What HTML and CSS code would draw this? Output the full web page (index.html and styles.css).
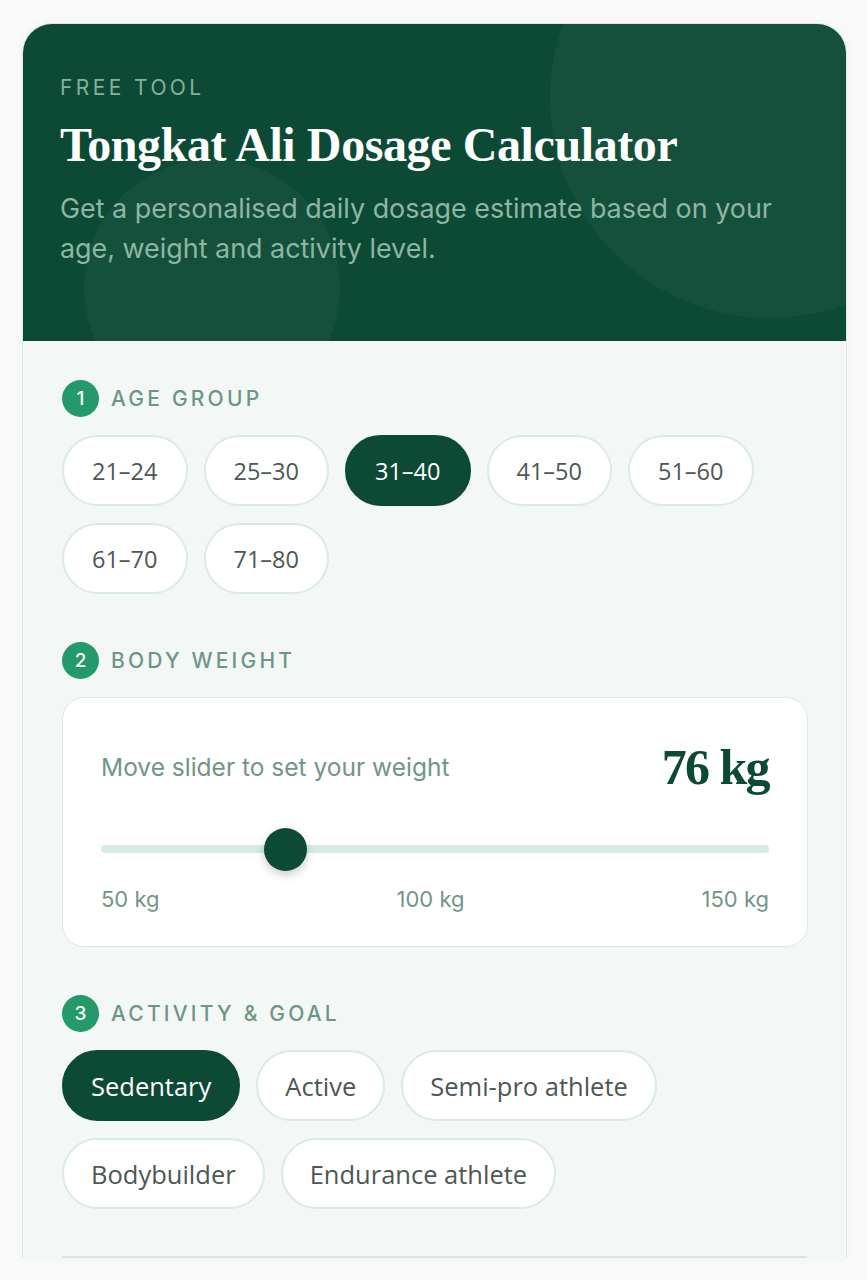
FILE: index.html
```html
<!DOCTYPE html>
<html lang="en">
<head>
<meta charset="utf-8">
<title>Tongkat Ali Dosage Calculator</title>
<link rel="stylesheet" href="styles.css">
</head>
<body>
<div class="card">
  <header class="hero">
    <span class="deco deco-right"></span>
    <span class="deco deco-left"></span>
    <p class="eyebrow">FREE TOOL</p>
    <h1 class="title">Tongkat Ali Dosage Calculator</h1>
    <p class="lead">Get a personalised daily dosage estimate based on your age, weight and activity level.</p>
  </header>
  <main class="body">
    <section class="step">
      <div class="step-head"><span class="badge">1</span><span class="step-label">AGE GROUP</span></div>
      <div class="chips">
        <button class="chip chip-age">21–24</button>
        <button class="chip chip-age">25–30</button>
        <button class="chip chip-age chip-on">31–40</button>
        <button class="chip chip-age">41–50</button>
        <button class="chip chip-age">51–60</button>
        <button class="chip chip-age">61–70</button>
        <button class="chip chip-age">71–80</button>
      </div>
    </section>
    <section class="step">
      <div class="step-head"><span class="badge">2</span><span class="step-label">BODY WEIGHT</span></div>
      <div class="weight-card">
        <div class="weight-top">
          <span class="weight-hint">Move slider to set your weight</span>
          <span class="weight-value">76 kg</span>
        </div>
        <div class="slider">
          <div class="track"></div>
          <div class="thumb" style="left: 27.5%"></div>
        </div>
        <div class="scale"><span>50 kg</span><span>100 kg</span><span>150 kg</span></div>
      </div>
    </section>
    <section class="step">
      <div class="step-head"><span class="badge">3</span><span class="step-label">ACTIVITY &amp; GOAL</span></div>
      <div class="chips">
        <button class="chip chip-text chip-on">Sedentary</button>
        <button class="chip chip-text">Active</button>
        <button class="chip chip-text">Semi-pro athlete</button>
        <button class="chip chip-text">Bodybuilder</button>
        <button class="chip chip-text">Endurance athlete</button>
      </div>
    </section>
    <hr class="divider">
  </main>
</div>
</body>
</html>
```

FILE: styles.css
```css
* { box-sizing: border-box; }
html, body { margin: 0; padding: 0; }
body {
  background: #f9faf9;
  font-family: "Inter", "DejaVu Sans", sans-serif;
  padding: 23px 20px 0 22px;
  height: 1280px;
  overflow: hidden;
}
.card {
  width: 825px;
  border-radius: 30px 30px 0 0;
  overflow: hidden;
  border: 1px solid #dce9e3;
  border-bottom: none;
  background: #f3f8f6;
  box-shadow: 0 0 14px rgba(0, 40, 20, 0.04);
}
.hero {
  position: relative;
  overflow: hidden;
  background: #0c4a35;
  height: 318px;
  padding: 50px 38px 0 38px;
  margin: -1px -1px 0 -1px;
}
.deco {
  position: absolute;
  border-radius: 50%;
  background: rgba(255, 255, 255, 0.035);
  pointer-events: none;
}
.deco-right { width: 440px; height: 440px; left: 528px; top: -145px; }
.deco-left { width: 256px; height: 256px; left: 62px; top: 136px; }
.eyebrow {
  position: relative;
  margin: 0;
  font-size: 21px;
  letter-spacing: 3.4px;
  color: #86b09d;
  line-height: 30px;
}
.title {
  position: relative;
  margin: 13px 0 0;
  font-family: "Liberation Serif", "DejaVu Serif", serif;
  font-weight: 700;
  font-size: 48px;
  letter-spacing: -0.4px;
  line-height: 58px;
  color: #ffffff;
}
.lead {
  position: relative;
  margin: 14px 0 0;
  font-size: 26.9px;
  line-height: 40px;
  color: #8db6a3;
  max-width: 740px;
}
.body {
  padding: 38px 38px 0 39px;
  display: flex;
  flex-direction: column;
}
.step { display: flex; flex-direction: column; gap: 18px; margin-bottom: 47px; }
.step-head { display: flex; align-items: center; gap: 12px; height: 38px; }
.badge {
  width: 37px; height: 37px;
  border-radius: 50%;
  background: #24996a;
  color: #ffffff;
  font-size: 19px;
  font-weight: 500;
  display: flex; align-items: center; justify-content: center;
}
.step-label {
  font-size: 21px;
  font-weight: 500;
  letter-spacing: 3.2px;
  color: #6e9685;
}
.chips { display: flex; flex-wrap: wrap; gap: 17px 16px; }
.chip {
  height: 71px;
  padding: 0 27px;
  border: 2px solid #d9ebe2;
  border-radius: 36px;
  background: #ffffff;
  font-family: "Open Sans", "Lato", sans-serif;
  font-size: 23.5px;
  color: #4d5753;
  display: flex; align-items: center;
}
.chip-age { padding: 0 28px; }
.chip-text { font-size: 25.5px; padding: 0 27px; }
.chip-on { background: #0c4a35; border-color: #0c4a35; color: #ffffff; }
.weight-card {
  background: #ffffff;
  border: 1.5px solid #d9ebe2;
  border-radius: 22px;
  padding: 43px 38px 34px 38px;
  height: 250px;
}
.weight-top { display: flex; justify-content: space-between; align-items: center; height: 52px; }
.weight-hint { font-size: 24.5px; color: #739587; }
.weight-value {
  font-family: "Liberation Serif", "DejaVu Serif", serif;
  font-weight: 700;
  font-size: 50px;
  letter-spacing: -1.6px;
  color: #0c4a35;
}
.slider { position: relative; height: 42px; margin-top: 35px; }
.track {
  position: absolute; left: 0; right: 0; top: 17px;
  height: 8px; border-radius: 4px; background: #d5ece3;
}
.thumb {
  position: absolute; top: 0;
  width: 43px; height: 43px; margin-left: -21px;
  border-radius: 50%;
  background: #0c4a35;
  box-shadow: 0 4px 10px rgba(0, 0, 0, 0.2);
}
.scale { display: flex; justify-content: space-between; margin-top: 16px; font-size: 22px; color: #739587; }
.divider { border: none; height: 2px; background: #d8e8e1; margin: 0; width: 745px; }
```
